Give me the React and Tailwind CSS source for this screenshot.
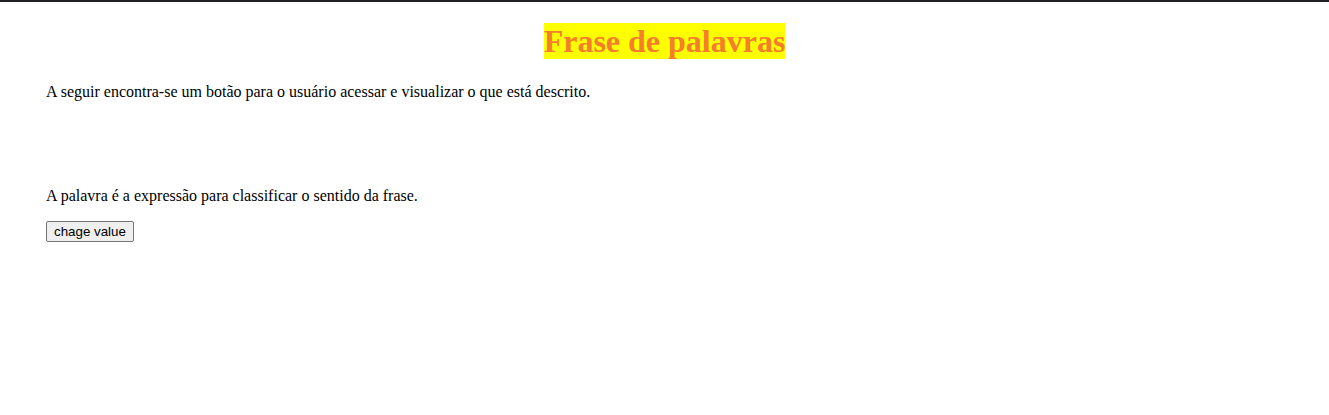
const App = () => {
    return (
        <div className="min-h-screen bg-white font-['Liberation_Serif','Times_New_Roman',serif] text-black">
            <div className="h-[2px] bg-[#202124]" />

            <div className="px-[46px] pt-[21px]">
                <h1 className="text-center text-[32px] leading-[37px] font-bold">
                    <span className="bg-[#ffff00] text-[#f57d2b]">Frase de palavras</span>
                </h1>

                <p className="mt-[23px] text-base leading-[18px]">
                    A seguir encontra-se um botão para o usuário acessar e visualizar o que está descrito.
                </p>

                <p className="mt-[86px] text-base leading-[18px]">
                    A palavra é a expressão para classificar o sentido da frase.
                </p>

                <button
                    type="button"
                    className="mt-[16px] h-[21px] px-[7px] bg-[#efefef] border border-[#767676] rounded-[2px] font-['Liberation_Sans',Arial,sans-serif] text-[13.33px] leading-[16px] hover:bg-[#e5e5e5]"
                >
                    chage value
                </button>
            </div>
        </div>
    );
};

export default App;
